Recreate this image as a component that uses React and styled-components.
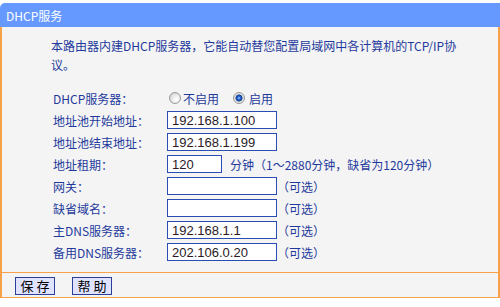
import React from 'react'
import styled, { createGlobalStyle } from 'styled-components'

const GlobalStyle = createGlobalStyle`
  body {
    margin: 0;
    background: #fff;
    font-family: "Noto Sans CJK SC", "Noto Sans", sans-serif;
  }
`;

const Frame = styled.div`
  width: 500px;
  margin-top: 3px;
`;

const TitleBar = styled.div`
  height: 24px;
  padding-left: 6px;
  display: flex;
  align-items: center;
  background-color: #6699ff;
  border-top-left-radius: 5px;
  color: #fff;
  font-size: 12px;
`;

const Panel = styled.div`
  border-left: 2px solid #f7a24b;
  border-right: 2px solid #f7a24b;
  border-bottom: 1px solid #f7a24b;
  background-color: #f4f4f4;
  padding: ${props => props.padding};
`;

const Intro = styled.p`
  margin: 0;
  font-size: 12px;
  line-height: 19px;
  color: #1f3a9c;
`;

const Form = styled.div`
  display: grid;
  grid-template-columns: 114px auto;
  grid-auto-rows: 22px;
  align-items: center;
  margin: 13px 0 0 2px;
  font-size: 12px;
  color: #1f3a9c;
`;

const Label = styled.div`
  white-space: nowrap;
`;

const Field = styled.div`
  display: flex;
  align-items: center;
  white-space: nowrap;
`;

const TextInput = styled.input`
  box-sizing: border-box;
  width: ${props => props.width}px;
  height: 18px;
  margin: 0;
  padding: 0 0 0 4px;
  border: 1px solid #2b4db3;
  background: #fff;
  font-family: "Liberation Sans", Arial, sans-serif;
  font-size: 13px;
  color: #2a1a26;
  outline: none;
`;

const Suffix = styled.span`
  margin-left: ${props => props.gap}px;
`;

const RadioDot = styled.span`
  box-sizing: border-box;
  display: inline-block;
  width: 12px;
  height: 12px;
  margin-left: ${props => props.offset}px;
  border-radius: 50%;
  border: 1px solid #9a9a9a;
  background: ${props => props.checked
    ? 'radial-gradient(circle, #a8d4ff 0, #2366cc 1.6px, #1a3f8f 3.2px, #d8d8d8 3.8px, #f6f6f6 100%)'
    : 'radial-gradient(circle at 65% 65%, #ffffff 0, #f0f0f0 35%, #c8c8c8 100%)'};
`;

const RadioText = styled.span`
  margin-left: ${props => props.gap}px;
`;

const ButtonBar = styled(Panel)`
  display: flex;
  gap: 17px;
  height: 25px;
  box-sizing: border-box;
  padding: 4px 0 0 13px;
`;

const Button = styled.button`
  width: 40px;
  height: 18px;
  padding: 0 0 0 3px;
  border: 1px solid #2c3e9a;
  background-color: #dfe3ff;
  font-family: "Noto Sans CJK SC", sans-serif;
  font-size: 13px;
  line-height: 16px;
  letter-spacing: 3px;
  color: #000;
`;

const Radio = ({ checked, offset, gap, children }) => (
  <>
    <RadioDot checked={checked} offset={offset} />
    <RadioText gap={gap}>{children}</RadioText>
  </>
)

const rows = [
  { label: '地址池开始地址：', value: '192.168.1.100', width: 110 },
  { label: '地址池结束地址：', value: '192.168.1.199', width: 110 },
  { label: '地址租期：', value: '120', width: 55, suffix: '分钟（1～2880分钟，缺省为120分钟）', gap: 8 },
  { label: '网关：', value: '', width: 110, suffix: '（可选）', gap: 0 },
  { label: '缺省域名：', value: '', width: 110, suffix: '（可选）', gap: 0 },
  { label: '主DNS服务器：', value: '192.168.1.1', width: 110, suffix: '（可选）', gap: 0 },
  { label: '备用DNS服务器：', value: '202.106.0.20', width: 110, suffix: '（可选）', gap: 0 },
]

const App = () => {
  return (
    <>
      <GlobalStyle />
      <Frame>
        <TitleBar>DHCP服务</TitleBar>
        <Panel padding="9px 0 9px 49px">
          <Intro>
            本路由器内建DHCP服务器，它能自动替您配置局域网中各计算机的TCP/IP协<br />议。
          </Intro>
          <Form>
            <Label>DHCP服务器：</Label>
            <Field>
              <Radio offset={2} gap={2}>不启用</Radio>
              <Radio checked offset={14} gap={4}>启用</Radio>
            </Field>
            {rows.map(row => (
              <React.Fragment key={row.label}>
                <Label>{row.label}</Label>
                <Field>
                  <TextInput width={row.width} defaultValue={row.value} />
                  {row.suffix && <Suffix gap={row.gap}>{row.suffix}</Suffix>}
                </Field>
              </React.Fragment>
            ))}
          </Form>
        </Panel>
        <ButtonBar>
          <Button>保存</Button>
          <Button>帮助</Button>
        </ButtonBar>
      </Frame>
    </>
  )
}

export default App
